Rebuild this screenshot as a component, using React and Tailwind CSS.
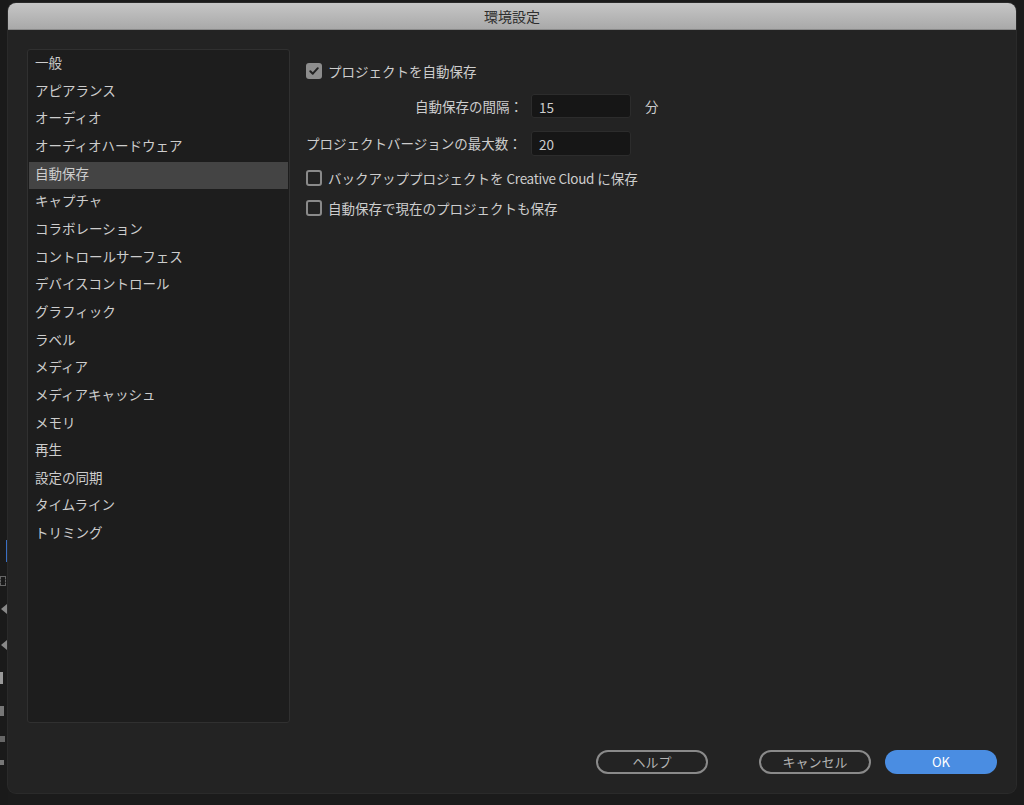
import React from "react";

const font = { fontFamily: "'Noto Sans CJK JP', 'Noto Sans', sans-serif" };

const items = [
  "一般",
  "アピアランス",
  "オーディオ",
  "オーディオハードウェア",
  "自動保存",
  "キャプチャ",
  "コラボレーション",
  "コントロールサーフェス",
  "デバイスコントロール",
  "グラフィック",
  "ラベル",
  "メディア",
  "メディアキャッシュ",
  "メモリ",
  "再生",
  "設定の同期",
  "タイムライン",
  "トリミング",
];

function Checkbox({ checked }) {
  return (
    <span
      className={
        "flex h-4 w-4 shrink-0 items-center justify-center rounded-[3px] " +
        (checked ? "bg-[#8d8d8d]" : "border-2 border-[#8a8a8a]")
      }
    >
      {checked && (
        <svg width="12" height="12" viewBox="0 0 12 12">
          <path d="M2.3 6.2 L4.8 8.7 L9.8 3.2" fill="none" stroke="#222" strokeWidth="2" strokeLinecap="round" strokeLinejoin="round" />
        </svg>
      )}
    </span>
  );
}

function LeftStrip() {
  return (
    <div className="flex w-[8px] shrink-0 flex-col items-start bg-[#1a1a1a]">
      <div className="mt-[540px] h-[22px] w-[2px] ml-[6px] bg-[#3a6fc4]" />
      <div className="mt-[14px] h-[10px] w-[6px] border border-dashed border-[#666]" />
      <div className="mt-[18px] ml-[1px] h-0 w-0 border-y-[5px] border-r-[6px] border-y-transparent border-r-[#888]" />
      <div className="mt-[26px] ml-[1px] h-0 w-0 border-y-[5px] border-r-[6px] border-y-transparent border-r-[#888]" />
      <div className="mt-[22px] h-[12px] w-[3px] bg-[#999]" />
      <div className="mt-[22px] h-[10px] w-[4px] bg-[#777]" />
      <div className="mt-[20px] h-[6px] w-[5px] bg-[#666]" />
      <div className="mt-[18px] h-[5px] w-[4px] bg-[#777]" />
    </div>
  );
}

export default function App() {
  return (
    <div className="flex h-[805px] w-[1024px] overflow-hidden bg-[#1b1b1b] text-[13.5px] text-[#cdcdcd]" style={font}>
      <LeftStrip />
      <div className="flex flex-col pt-[3px]">
        <div className="flex h-[790px] w-[1008px] flex-col overflow-hidden rounded-[8px] bg-[#232323] shadow-[0_0_0_1px_#2a2a2a]">
          <div className="flex h-[27px] shrink-0 items-center justify-center border-b border-[#8a8a8a] bg-gradient-to-b from-[#c6c6c6] to-[#a9a9a9] text-[14px] text-[#2e2e2e]">
            環境設定
          </div>
          <div className="flex flex-1 pl-[19px] pt-[19px]">
            <div className="flex h-[674px] w-[263px] shrink-0 flex-col rounded-[3px] border border-[#303030] bg-[#1d1d1d] p-[1px]">
              {items.map((it, i) => (
                <div
                  key={it}
                  className={
                    "flex h-[27.65px] shrink-0 items-center px-[6px] pb-[5px] " +
                    (i === 4 ? "bg-[#444444]" : "")
                  }
                >
                  {it}
                </div>
              ))}
            </div>
            <div className="flex flex-1 flex-col pl-[16px] pt-[14px]">
              <div className="flex h-[16px] items-center gap-[6px]">
                <Checkbox checked />
                <span>プロジェクトを自動保存</span>
              </div>
              <div className="mt-[15px] flex h-[24px] items-center">
                <span className="w-[217px] text-right">自動保存の間隔：</span>
                <div className="ml-[8px] flex h-[24px] w-[100px] items-center rounded-[3px] border border-[#2c2c2c] bg-[#161616] px-[7px] pt-[2px]">15</div>
                <span className="ml-[14px]">分</span>
              </div>
              <div className="mt-[13px] flex h-[25px] items-center">
                <span className="w-[217px]">プロジェクトバージョンの最大数：</span>
                <div className="ml-[8px] flex h-[25px] w-[100px] items-center rounded-[3px] border border-[#2c2c2c] bg-[#161616] px-[7px] pt-[2px]">20</div>
              </div>
              <div className="mt-[14px] flex h-[16px] items-center gap-[6px]">
                <Checkbox />
                <span>
                  バックアッププロジェクトを <span className="tracking-[-0.3px]">Creative Cloud</span> に保存
                </span>
              </div>
              <div className="mt-[14px] flex h-[16px] items-center gap-[6px]">
                <Checkbox />
                <span>自動保存で現在のプロジェクトも保存</span>
              </div>
            </div>
          </div>
          <div className="flex h-[43px] shrink-0 items-start pr-[19px] text-[13px]">
            <div className="ml-[588px] flex h-[24px] w-[112px] items-center justify-center rounded-full border-2 border-[#8a8a8a] text-[#b4b4b4]">ヘルプ</div>
            <div className="ml-[51px] flex h-[24px] w-[112px] items-center justify-center rounded-full border-2 border-[#8a8a8a] text-[#b4b4b4]">キャンセル</div>
            <div className="ml-[14px] flex h-[24px] w-[112px] items-center justify-center rounded-full bg-[#4a8de2] text-white">OK</div>
          </div>
        </div>
      </div>
    </div>
  );
}
